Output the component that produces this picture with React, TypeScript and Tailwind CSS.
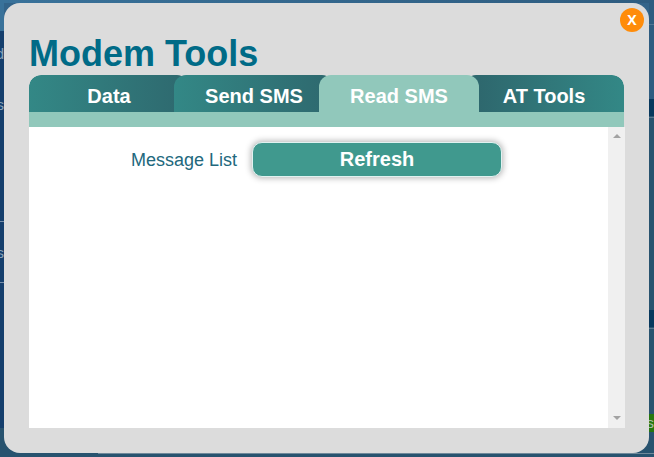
import React from "react";

const tabs = [
  { label: "Data", style: "z-10 bg-linear-to-r from-[#338886] to-[#2e686e]" },
  { label: "Send SMS", style: "z-20 -ml-[15px] bg-linear-to-r from-[#338886] to-[#2e686e]" },
  { label: "Read SMS", style: "z-30 -ml-[15px] bg-[#91c8bb]" },
  { label: "AT Tools", style: "z-0 -ml-[15px] bg-linear-to-r from-[#2e686e] from-10% to-[#338886]" },
];

function LeftEdge() {
  return (
    <div className="flex w-1 flex-col overflow-hidden bg-[#153f6d] text-[15px] leading-4 text-[#8aa3b8]">
      <div className="h-[31px] shrink-0 bg-[#39729a]" />
      <span className="mt-[15px] flex justify-end">d</span>
      <span className="mt-[35px] flex justify-end">s</span>
      <div className="mt-[108px] h-px shrink-0 bg-[#7890aa]" />
      <span className="mt-[23px] flex justify-end">s</span>
      <div className="mt-[21px] h-px shrink-0 bg-[#7890aa]" />
      <div className="mt-[145px] flex-1 bg-[#28536f]" />
    </div>
  );
}

function RightEdge() {
  return (
    <div className="flex w-[5px] flex-col overflow-hidden bg-[#28536f] text-[15px] text-[#a9bda5]">
      <div className="h-6 shrink-0 bg-[#2e5c80]" />
      <div className="h-px shrink-0 bg-[#527795]" />
      <div className="h-[74px] shrink-0 bg-[#2e5c80]" />
      <div className="h-[17px] shrink-0 bg-[#07385d]" />
      <div className="mt-px h-px shrink-0 bg-[#58778f]" />
      <div className="mt-[192px] h-[17px] shrink-0 bg-[#07385d]" />
      <div className="mt-px h-px shrink-0 bg-[#58778f]" />
      <div className="mt-[85px] flex h-[18px] shrink-0 justify-end bg-[#26770f] leading-[17px]">s</div>
      <div className="mt-[21px] h-px shrink-0 bg-[#70899a]" />
    </div>
  );
}

export default function App() {
  return (
    <div className="flex h-[457px] w-[654px] overflow-hidden bg-[#28536f] font-['Liberation_Sans',Arial,sans-serif]">
      <LeftEdge />
      <div className="flex w-[645px] flex-col bg-linear-to-b from-[#33648a] from-[31px] to-[#28536f] to-[31px]">
        <div className="h-[3px] bg-linear-to-r from-[#39729a] to-[#2e5c80]" />
        <section className="relative h-[450px] rounded-[16px] bg-[#dcdcdc] px-[25px] pt-[29px]">
          <button className="absolute top-[5px] right-[5px] flex size-6 items-center justify-center rounded-full bg-[#ff8c0a] font-['Open_Sans','Noto_Sans',sans-serif] text-[14px] leading-none font-bold text-white">
            X
          </button>
          <h1 className="h-[43px] text-[36px] leading-[43px] font-bold whitespace-nowrap text-[#006b87]">
            Modem Tools
          </h1>
          <div className="w-[595px]">
            <nav className="flex h-[37px] overflow-hidden rounded-t-[12px]">
              {tabs.map((tab) => (
                <button
                  key={tab.label}
                  className={`relative h-[37px] w-40 shrink-0 rounded-t-[12px] pt-[5px] text-center text-[20px] leading-8 font-bold text-white ${tab.style}`}
                >
                  {tab.label}
                </button>
              ))}
            </nav>
            <div className="h-[15px] bg-[#91c8bb]" />
          </div>
          <div className="flex h-[301px] w-[596px] bg-white">
            <div className="flex flex-1 items-start gap-[15px] pt-[15px]">
              <span className="w-[208px] pt-0.5 text-right text-[18px] leading-[33px] text-[#22687d]">
                Message List
              </span>
              <button className="flex h-[35px] w-[250px] justify-center rounded-[10px] border border-[#e0f2f0] bg-[#40998e] text-[20px] leading-[33px] font-bold text-white shadow-[0_0_6px_1px_rgba(0,0,0,0.3)]">
                Refresh
              </button>
            </div>
            <div className="flex w-[17px] flex-col items-center justify-between bg-[#f0f0f0] pt-[7px] pb-2">
              <svg width="8" height="4" viewBox="0 0 8 4" fill="#a3a3a3">
                <path d="M4 0L8 4H0Z" />
              </svg>
              <svg width="8" height="4" viewBox="0 0 8 4" fill="#a3a3a3">
                <path d="M0 0H8L4 4Z" />
              </svg>
            </div>
          </div>
        </section>
        <div className="ml-[94px] h-px bg-[#70899a]" />
      </div>
      <RightEdge />
    </div>
  );
}
